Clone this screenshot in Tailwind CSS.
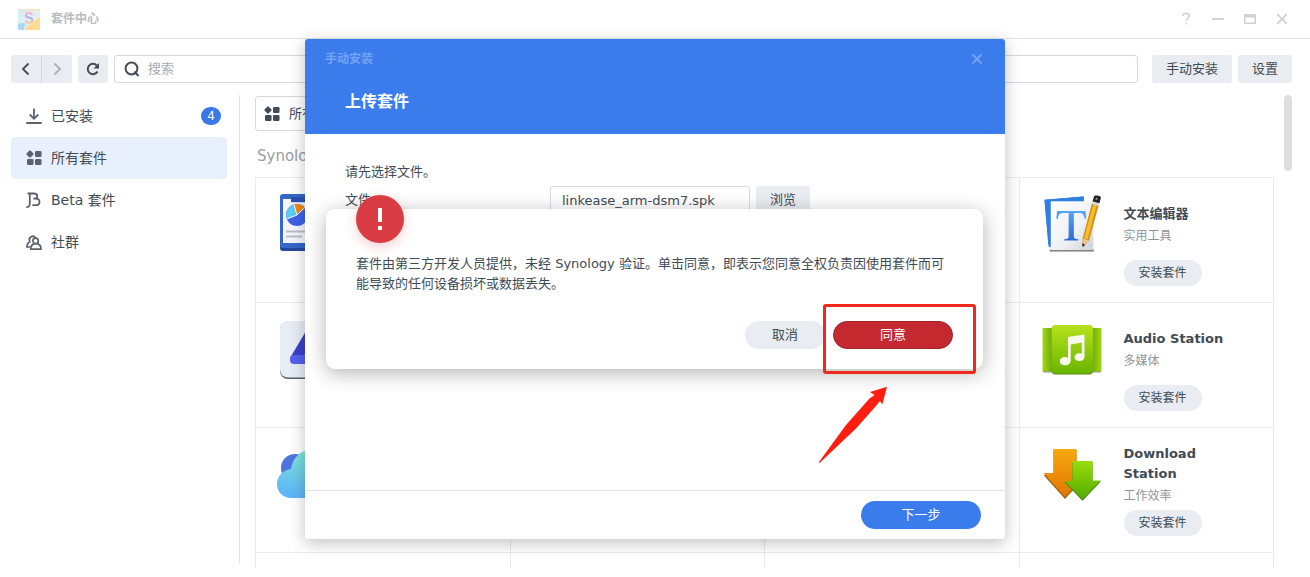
<!DOCTYPE html>
<html lang="zh-CN">
<head>
<meta charset="utf-8">
<meta name="viewport" content="width=device-width, initial-scale=1">
<title>套件中心</title>
<script src="https://cdn.jsdelivr.net/npm/@tailwindcss/browser@4"></script>
</head>
<body class="bg-white font-['DejaVu_Sans','Noto_Sans_CJK_SC',sans-serif] text-[13px] leading-5 text-[#414b55]">
<div class="relative flex h-screen flex-col overflow-hidden pb-[9px]">

  <!-- Window title bar -->
  <header class="flex h-[39px] shrink-0 items-center border-b border-[#e2e4e6] pr-5 pl-[18px]">
    <svg class="size-[22px]" viewBox="0 0 22 22" aria-hidden="true">
      <defs>
        <linearGradient id="s1" x1="0" y1="0" x2="0" y2="1"><stop offset="0" stop-color="#ffb3ba"/><stop offset=".5" stop-color="#a9a4f0"/><stop offset="1" stop-color="#ffc39a"/></linearGradient>
        <linearGradient id="bag" x1="0" y1="0" x2="1" y2="1"><stop offset="0" stop-color="#d3ecfa"/><stop offset="1" stop-color="#f1f1ea"/></linearGradient>
      </defs>
      <rect y="1" width="22" height="21" rx="2" fill="url(#bag)"/>
      <path d="M0 1h22v1.500H0z" fill="#f3e6c8"/>
      <path d="M22 9v11a2 2 0 0 1-2 2H7c0-3 3-5 7-6 2-3 5-6 8-7z" fill="#fbdc92"/>
      <path d="M0 16c3-1.500 6-1 8 0-2 2-2 4-2 6H2a2 2 0 0 1-2-2z" fill="#a9d9f7"/>
      <path d="M14.200 6.700c-.5-1.300-1.600-1.900-3.200-1.900-1.900 0-3.100 1-3.100 2.400 0 3.300 6.500 1.700 6.500 5 0 1.600-1.400 2.500-3.300 2.500-1.800 0-3.100-.8-3.500-2.200" fill="none" stroke="url(#s1)" stroke-width="1.800"/>
    </svg>
    <h1 class="ml-[11px] text-xs font-bold text-[#b9bcc0]">套件中心</h1>
    <div class="ml-auto flex items-center gap-4 text-[#d0d2d5]">
      <button class="grid size-4 place-items-center" aria-label="帮助"><svg class="size-4" viewBox="0 0 16 16" fill="none" stroke="currentColor" stroke-width="1.600"><path d="M4.800 5c.1-1.800 1.400-2.800 3.200-2.800s3.200 1 3.200 2.600c0 2.200-3.100 2.300-3.100 5M8.100 11.500v2"/></svg></button>
      <button class="grid size-4 place-items-center" aria-label="最小化"><svg class="size-4" viewBox="0 0 16 16"><path d="M2 7h12v2H2z" fill="currentColor"/></svg></button>
      <button class="grid size-4 place-items-center" aria-label="最大化"><svg class="size-4" viewBox="0 0 16 16"><path fill="currentColor" fill-rule="evenodd" d="M2 3h12v10H2zM3.500 6.500v5h9v-5z"/></svg></button>
      <button class="grid size-4 place-items-center" aria-label="关闭"><svg class="size-4" viewBox="0 0 16 16" fill="none" stroke="currentColor" stroke-width="1.900"><path d="M3.200 3.200l9.600 9.600M12.800 3.200l-9.600 9.600"/></svg></button>
    </div>
  </header>

  <!-- Toolbar -->
  <div class="mt-4 flex h-7 shrink-0 items-center pr-[18px] pl-[11px]">
    <button class="grid h-7 w-[30px] place-items-center rounded-l-[3px] bg-[#e9edf1]" aria-label="后退"><svg class="size-4" viewBox="0 0 16 16" fill="none" stroke="#434b54" stroke-width="1.800"><path d="M10.500 2.500L5 8l5.500 5.500"/></svg></button>
    <button class="grid h-7 w-[31px] place-items-center rounded-r-[3px] border-l border-[#d3d8dd] bg-[#e9edf1]" aria-label="前进"><svg class="size-4" viewBox="0 0 16 16" fill="none" stroke="#a9b0b7" stroke-width="1.800"><path d="M5.500 2.500L11 8l-5.500 5.500"/></svg></button>
    <button class="ml-1.5 grid h-7 w-[30px] place-items-center rounded-[3px] bg-[#e9edf1]" aria-label="刷新"><svg class="size-4" viewBox="0 0 16 16"><path d="M12.500 10.500A5.200 5.200 0 1 1 11.800 4.500" fill="none" stroke="#434b54" stroke-width="2"/><path d="M14 2v5.500H8.500z" fill="#434b54"/></svg></button>
    <label class="ml-1.5 flex h-7 min-w-0 flex-1 items-center rounded-[3px] border border-[#d5d9dd] pl-[9px]">
      <svg class="size-4" viewBox="0 0 16 16" fill="none" stroke="#434b54" stroke-width="2"><circle cx="7.500" cy="7.500" r="5.900"/><path d="M10.500 10.500l4 4.500"/></svg>
      <input type="text" aria-label="搜索" placeholder="搜索" class="ml-2 min-w-0 flex-1 outline-none placeholder:text-[#a6abb1]">
    </label>
    <button class="ml-3.5 h-7 w-20 rounded-[3px] bg-[#e9edf1]">手动安装</button>
    <button class="ml-1.5 h-7 w-[54px] rounded-[3px] bg-[#e9edf1]">设置</button>
  </div>

  <div class="mt-3 flex min-h-0 flex-1 pr-[18px] pl-[11px]">
    <!-- Sidebar -->
    <nav class="mb-[5px] w-[229px] shrink-0 border-r border-[#e1e4e7] pr-3 text-sm">
      <a href="#" class="flex h-[42px] items-center rounded pr-1.5 pl-[15px]">
        <svg class="mr-[9px] size-4" viewBox="0 0 16 16" fill="none" stroke="#5a636d" stroke-width="1.800"><path d="M8 .5v10M3.700 6.500L8 10.800l4.300-4.300M.3 15h15.400"/></svg>
        已安装
        <span class="ml-auto grid h-[18px] w-5 place-items-center rounded-full bg-[#3b78e7] text-xs text-white">4</span>
      </a>
      <a href="#" aria-current="page" class="flex h-[42px] items-center rounded bg-[#e9f0fd] pl-[15px]">
        <svg class="mr-[9px] size-4" viewBox="0 0 16 16" fill="#5a636d"><path d="M4 1.500L6.500 4 4 6.500 1.500 4z" stroke="#5a636d" stroke-width="2.200" stroke-linejoin="round"/><rect x="9" y="1" width="6.500" height="6" rx="1.200"/><rect x="1" y="9" width="6.500" height="6" rx="1.200"/><rect x="9" y="9" width="6.500" height="6" rx="1.200"/></svg>
        所有套件
      </a>
      <a href="#" class="flex h-[42px] items-center rounded pl-[15px]">
        <svg class="mr-[9px] size-4" viewBox="0 0 16 16" fill="none" stroke="#5a636d" stroke-width="1.800"><path d="M.3 15.200c2.500 0 3.500-1.300 3.500-4V1.500M1.500 1.500h6.300c2.300 0 3.500 1 3.500 2.600 0 1.500-1 2.500-2.700 2.500H7.300M8.500 6.600h1c2.400 0 4 1.300 4 3.300s-1.600 3.300-4 3.300H6.300"/></svg>
        Beta 套件
      </a>
      <a href="#" class="flex h-[42px] items-center rounded pl-[15px]">
        <svg class="mr-[9px] size-4" viewBox="0 0 16 16" fill="none" stroke="#5a636d" stroke-width="1.700"><path d="M3.900 7.300a3.200 3.200 0 1 1 5.600-3.300M4.500 7.800C2 8.500.9 10 .9 13h3.500"/><circle cx="9.600" cy="6.900" r="2.700"/><path d="M4.800 15.100c0-3.700 1.800-5.500 5-5.500s5.200 1.800 5.200 5.500z"/></svg>
        社群
      </a>
    </nav>

    <!-- Package list -->
    <main class="ml-[15px] flex min-w-0 flex-1 flex-col overflow-hidden">
      <button aria-haspopup="listbox" class="mt-px flex h-[35px] w-[160px] shrink-0 items-center rounded-[3px] border border-[#d5d9dd] pl-2">
        <svg class="mr-[9px] size-4" viewBox="0 0 16 16" fill="#434b54"><path d="M4 1.500L6.500 4 4 6.500 1.500 4z" stroke="#434b54" stroke-width="2.200" stroke-linejoin="round"/><rect x="9" y="1" width="6.500" height="6" rx="1.200"/><rect x="1" y="9" width="6.500" height="6" rx="1.200"/><rect x="9" y="9" width="6.500" height="6" rx="1.200"/></svg>
        所有套件
      </button>
      <h2 class="mt-[15px] mb-[11px] pl-0.5 text-[15px] text-[#9a9ea3]">Synology 套件</h2>
      <ul class="grid w-full shrink-0 auto-rows-[125px] grid-cols-4 border-t border-l border-[#e9ebed] *:border-r *:border-b *:border-[#e9ebed]">
        <li class="pt-4 pl-6">
          <svg class="h-[58px] w-[50px]" viewBox="0 0 50 58"><rect y="2" width="50" height="55" rx="3" fill="#27479e"/><rect width="50" height="54" rx="3" fill="#3568c9"/><path d="M3 5h44v44H3z" fill="#f4f6fb"/><path d="M3 5h8v4h28V5h8" fill="#c9dcf5"/><path d="M11 3h28v5H11z" fill="#2b50b0"/><circle cx="17" cy="21" r="11" fill="#3d63e6"/><path d="M17 21L14 10.400A11 11 0 0 0 6.800 25z" fill="#5ecbf0"/><path d="M17 21L14 10.400a11 11 0 0 1 11 3z" fill="#f2860e"/><path d="M14 10.400L17 21 6.800 25M17 21l8-7.600" fill="none" stroke="#fff" stroke-width="1"/><path d="M6 37.500h20M6 42.500h16" stroke="#b9bdc9" stroke-width="2"/></svg>
        </li>
        <li></li><li></li>
        <li class="flex pt-4 pl-6">
          <svg class="h-[60px] w-[58px] shrink-0" viewBox="0 0 60 62">
            <defs><linearGradient id="pp" x1="0" y1="0" x2="1" y2="1"><stop offset="0" stop-color="#fff"/><stop offset=".6" stop-color="#eef0f4"/><stop offset="1" stop-color="#cfd2d9"/></linearGradient><linearGradient id="tt" x1="0" y1="0" x2="0" y2="1"><stop offset="0" stop-color="#5aa7ee"/><stop offset="1" stop-color="#2a6bd6"/></linearGradient></defs>
            <path d="M.500 6L41 2.500l4 48L5 55z" fill="#3c7fdc"/><path d="M.500 6L41 2.500v5H7v45l-2.500.5z" fill="#2f7fe0"/>
            <path d="M6 58.500h45.500" stroke="#777" stroke-width="2"/><rect x="7" y="7.500" width="44" height="50.500" fill="url(#pp)"/>
            <path d="M13.500 17.500h29.500l.6 8h-1.500c-.8-4.500-2-6-6-6h-5.200v23.500c0 3 .8 3.600 4.500 3.800V48H21v-1.200c3.700-.2 4.500-.8 4.500-3.800V19.500h-5.200c-4 0-5.300 1.500-6 6h-1.500z" fill="url(#tt)"/>
            <path d="M41 54.500l-1.500-.8.500-8L49.500 10l7 2.200-10 35.800z" fill="#d38e12"/><path d="M41.500 45.500L51 10.500l3.500 1-9.300 35.500z" fill="#f5bd2b"/><path d="M40 45.700l6.500 2.300-5.500 6.500-1.500-.8z" fill="#e8c692"/><path d="M39.700 51l2.600 1-1.300 2.500-1.500-.8z" fill="#333"/>
            <path d="M49.500 10l1-3.500 7 2-1 3.700z" fill="#d9d9d9"/><path d="M50.200 7.500l1.600-5c.5-1.700 7.500-.8 7 1.500l-1.500 5.500z" fill="#222"/><path d="M53 6l.8-2.500 2 .6L55 6.500z" fill="#888"/>
          </svg>
          <div class="ml-[22px] flex flex-col items-start pt-[10px]"><h3 class="font-bold">文本编辑器</h3><p class="mt-0.5 text-xs leading-5 text-[#8f959b]">实用工具</p><button class="mt-[14px] h-[26px] w-[78px] rounded-full bg-[#e9edf1] text-xs">安装套件</button></div>
        </li>
        <li class="pt-[18px] pl-6">
          <svg class="h-[58px] w-[58px]" viewBox="0 0 58 58"><rect y="1" width="58" height="57" rx="8" fill="#5a5f68"/><rect width="58" height="56.500" rx="8" fill="#e7ecf5"/><path d="M10 37L29 5l9 5-17 30z" fill="#3940c6"/><rect x="10" y="34" width="38" height="9" rx="4" fill="#5261ee"/></svg>
        </li>
        <li></li><li></li>
        <li class="flex pt-[21px] pl-[22px]">
          <svg class="h-[52px] w-[60px] shrink-0" viewBox="0 0 60 52">
            <defs><linearGradient id="gr" x1="0" y1="0" x2="0" y2="1"><stop offset="0" stop-color="#b6e21d"/><stop offset="1" stop-color="#69b500"/></linearGradient><linearGradient id="gs" x1="0" y1="0" x2="1" y2="0"><stop offset="0" stop-color="#9fd916"/><stop offset=".18" stop-color="#6da50a"/><stop offset=".82" stop-color="#6da50a"/><stop offset="1" stop-color="#9fd916"/></linearGradient></defs>
            <path d="M1 47h58v1.500H1z" fill="#999"/><rect x=".500" y="4" width="59" height="43.500" rx="1" fill="url(#gs)"/><rect x="9.500" y="2" width="41.500" height="48.500" rx="4" fill="#5a8f16"/><rect x="9.500" y="1" width="41.500" height="48.500" rx="4" fill="url(#gr)"/>
            <path d="M26 13l16.500-2.500v22c0 3-2 4.500-5 4.500s-5-1.300-5-3.800 2.300-4 5-4c1 0 1.700.1 2.300.4V18.500L28.700 20.500V36c0 3.500-2.200 5.300-5.700 5.300-3 0-5.200-1.300-5.200-4 0-2.600 2.400-4.200 5.200-4.200 1.200 0 2.200.2 3 .7z" fill="#f8faee"/>
          </svg>
          <div class="ml-[22px] flex flex-col items-start pt-[5px]"><h3 class="font-bold">Audio Station</h3><p class="mt-0.5 text-xs leading-5 text-[#8f959b]">多媒体</p><button class="mt-[14px] h-[26px] w-[78px] rounded-full bg-[#e9edf1] text-xs">安装套件</button></div>
        </li>
        <li class="pt-[18px] pl-[21px]">
          <svg class="h-[54px] w-[70px]" viewBox="0 0 70 54"><defs><linearGradient id="cl" x1=".3" y1="0" x2="0" y2="1"><stop offset="0" stop-color="#7fe6d8"/><stop offset="1" stop-color="#5aaefb"/></linearGradient></defs><circle cx="18" cy="22" r="14" fill="#4f74dd"/><path d="M15 52C6 52 0 46 0 38S6 24 14 23C16 10 25 3 37 4c12 1 18 10 18 20 8 1 12 7 12 14 0 8-6 14-14 14z" fill="url(#cl)"/></svg>
        </li>
        <li></li><li></li>
        <li class="flex pt-5 pl-[23px]">
          <svg class="h-[53px] w-[58px] shrink-0" viewBox="0 0 58 53">
            <defs><linearGradient id="og" x1="0" y1="0" x2="0" y2="1"><stop offset="0" stop-color="#f8a70d"/><stop offset="1" stop-color="#de7806"/></linearGradient><linearGradient id="gg" x1="0" y1="0" x2="0" y2="1"><stop offset="0" stop-color="#98dc0c"/><stop offset="1" stop-color="#52ac00"/></linearGradient></defs>
            <path d="M10.500 2h23v24H45L22 51 .500 27h10z" fill="#a2620e"/><path d="M10.500 1h23v23H45L22 49 .500 25h10z" fill="url(#og)"/>
            <path d="M29.500 14h20v19.500h8.300L39.500 52.800 21.500 34h8z" fill="#39790a"/><path d="M29.500 13h20v19.500h8.300L39.500 51.500 21.500 33h8z" fill="url(#gg)"/>
          </svg>
          <div class="-mt-1 ml-[23px] flex w-[110px] flex-col items-start"><h3 class="font-bold">Download Station</h3><p class="mt-0.5 text-xs leading-5 text-[#8f959b]">工作效率</p><button class="mt-1 h-[26px] w-[78px] rounded-full bg-[#e9edf1] text-xs">安装套件</button></div>
        </li>
        <li></li><li></li><li></li><li></li>
      </ul>
    </main>
    <div class="ml-[10px] h-[76px] w-2 shrink-0 rounded-full bg-[#dedede]"></div>
  </div>

  <!-- Manual install dialog -->
  <section role="dialog" aria-labelledby="dlg-title" class="absolute top-[39px] left-1/2 flex min-h-[500px] w-[700px] -translate-x-1/2 flex-col rounded-[3px] bg-white shadow-[0_4px_16px_rgba(0,0,0,0.25)]">
    <header class="h-[95px] rounded-t-[3px] bg-[#3b7ced] px-5 pt-[10px]">
      <div class="flex items-center justify-between text-xs leading-5 font-bold text-[#76a3f3]">
        <span>手动安装</span>
        <button aria-label="关闭" class="grid size-4 place-items-center"><svg class="size-4" viewBox="0 0 16 16" fill="none" stroke="currentColor" stroke-width="1.900"><path d="M3.500 3.500l9 9M12.500 3.500l-9 9"/></svg></button>
      </div>
      <h2 id="dlg-title" class="mt-[21px] ml-5 text-base leading-6 font-bold text-white">上传套件</h2>
    </header>
    <div class="flex-1 px-10 pt-7">
      <p>请先选择文件。</p>
      <div class="mt-1 flex items-center">
        <label for="pkg-file" class="w-[205px]">文件:</label>
        <input id="pkg-file" type="text" readonly value="linkease_arm-dsm7.spk" class="h-7 w-[200px] rounded-[3px] border border-[#d5d9dd] px-[11px] outline-none">
        <button class="ml-1.5 h-7 w-[54px] rounded-[3px] bg-[#e9edf1]">浏览</button>
      </div>
    </div>
    <footer class="flex h-[49px] items-start justify-end border-t border-[#e1e3e5] pt-[10px] pr-6">
      <button class="h-7 w-[120px] rounded-full bg-[#3b7ced] text-white">下一步</button>
    </footer>

    <!-- Third-party warning -->
    <div role="alertdialog" aria-describedby="warn" class="absolute top-[170px] left-[21px] h-[160px] w-[657px] rounded-[9px] bg-white px-[30px] pt-[45px] shadow-[0_4px_20px_rgba(0,0,0,0.3)]">
      <div class="absolute -top-[14px] left-[30px] grid size-12 place-items-center rounded-full bg-[#d93c43] shadow-[0_4px_12px_rgba(217,60,67,0.25)]">
        <svg class="h-[22px] w-1" viewBox="0 0 4 22" fill="#fff"><path d="M0 0h4v14H0zM0 18h4v4H0z"/></svg>
      </div>
      <p id="warn">套件由第三方开发人员提供，未经 Synology 验证。单击同意，即表示您同意全权负责因使用套件而可能导致的任何设备损坏或数据丢失。</p>
      <div class="mt-[27px] flex justify-end gap-2">
        <button class="h-7 w-20 rounded-full bg-[#e9edf1]">取消</button>
        <button class="h-7 w-[120px] rounded-full border border-[#9c2430] bg-[#c3292f] text-white">同意</button>
      </div>
    </div>

    <!-- Callout -->
    <div class="pointer-events-none absolute top-[265px] left-[518px] h-[70px] w-[153px] rounded-[3px] border-3 border-[#ee2a1f]"></div>
    <svg class="pointer-events-none absolute top-[347px] left-[513px] h-[78px] w-[70px]" viewBox="0 0 70 78" fill="#fd1d11"><path d="M69 .7L52 6 56.500 9 51.500 12.500 28 39 .8 76.200 1.600 77 38 42.500 57.500 20.500 62 15 64.300 18.500z"/></svg>
  </section>
</div>
</body>
</html>
